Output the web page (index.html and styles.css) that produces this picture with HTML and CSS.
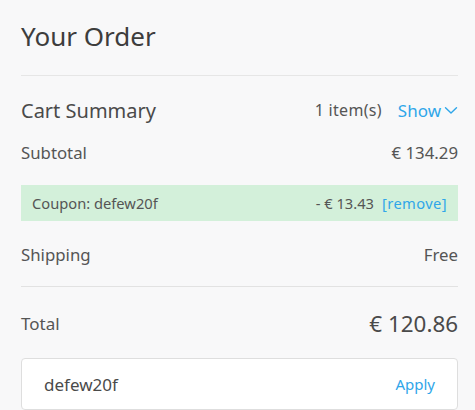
FILE: index.html
```html
<!DOCTYPE html>
<html>
<head>
<meta charset="utf-8">
<link rel="stylesheet" href="styles.css">
</head>
<body>
<div class="order">
  <h1 class="title">Your Order</h1>
  <div class="divider"></div>
  <div class="row summary">
    <span class="summary-label">Cart Summary</span>
    <span class="summary-right">
      <span class="count">1 item(s)</span>
      <span class="show">Show
        <svg class="chev" width="14" height="9" viewBox="0 0 14 9"><path d="M1.5 1.8 L7 7 L12.5 1.8" fill="none" stroke="#2fa6e9" stroke-width="1.4" stroke-linecap="round" stroke-linejoin="round"/></svg>
      </span>
    </span>
  </div>
  <div class="row line subtotal">
    <span>Subtotal</span>
    <span>€ 134.29</span>
  </div>
  <div class="coupon">
    <span>Coupon: defew20f</span>
    <span class="coupon-right"><span>- € 13.43</span><span class="remove">[remove]</span></span>
  </div>
  <div class="row line shipping">
    <span>Shipping</span>
    <span>Free</span>
  </div>
  <div class="divider second"></div>
  <div class="row total">
    <span class="total-label">Total</span>
    <span class="total-value">€ 120.86</span>
  </div>
  <div class="code-box">
    <span class="code">defew20f</span>
    <span class="apply">Apply</span>
  </div>
</div>
</body>
</html>
```
FILE: styles.css
```css
html, body {
  margin: 0;
  padding: 0;
  background: #f8f8f9;
}
body {
  font-family: "Noto Sans", "DejaVu Sans", sans-serif;
  color: #555555;
  overflow: hidden;
  height: 410px;
}
.order {
  padding: 0 17px 0 21px;
}
.title {
  margin: 0;
  padding-top: 19px;
  font-size: 26px;
  line-height: 34px;
  font-weight: 400;
  color: #3d3d3d;
  height: 34px;
}
.divider {
  height: 1px;
  background: #e6e6e6;
  margin-top: 22px;
}
.row {
  display: flex;
  justify-content: space-between;
  align-items: center;
}
.summary {
  margin-top: 21px;
  height: 26px;
}
.summary-label {
  font-size: 20px;
  color: #4a4a4a;
}
.summary-right {
  display: flex;
  align-items: center;
  gap: 16px;
}
.count {
  font-size: 16px;
  letter-spacing: 0.3px;
  color: #555;
}
.show {
  font-size: 17px;
  color: #2fa6e9;
  display: flex;
  align-items: center;
  gap: 3px;
}
.chev {
  display: block;
  margin-top: 1px;
}
.line {
  font-size: 16.8px;
  height: 24px;
}
.subtotal {
  margin-top: 17px;
}
.coupon {
  margin-top: 21px;
  height: 36px;
  background: #d3f0da;
  display: flex;
  justify-content: space-between;
  align-items: center;
  padding: 0 11px 0 11px;
  font-size: 14.7px;
  color: #555;
}
.coupon-right {
  display: flex;
  gap: 8px;
}
.remove {
  color: #2fa6e9;
  letter-spacing: 0.4px;
}
.shipping {
  margin-top: 21px;
}
.divider.second {
  margin-top: 20px;
  background: #e2e2e2;
}
.total {
  margin-top: 22px;
  height: 28px;
}
.total-label {
  font-size: 17px;
  color: #555;
}
.total-value {
  font-size: 22.4px;
  color: #4a4a4a;
}
.code-box {
  margin-top: 21px;
  height: 50px;
  background: #ffffff;
  border: 1px solid #dedede;
  border-radius: 4px;
  display: flex;
  justify-content: space-between;
  align-items: center;
  padding: 0 22px 0 22px;
}
.code {
  font-size: 17px;
  color: #4a4a4a;
}
.apply {
  font-size: 15px;
  color: #2fa6e9;
}
```
